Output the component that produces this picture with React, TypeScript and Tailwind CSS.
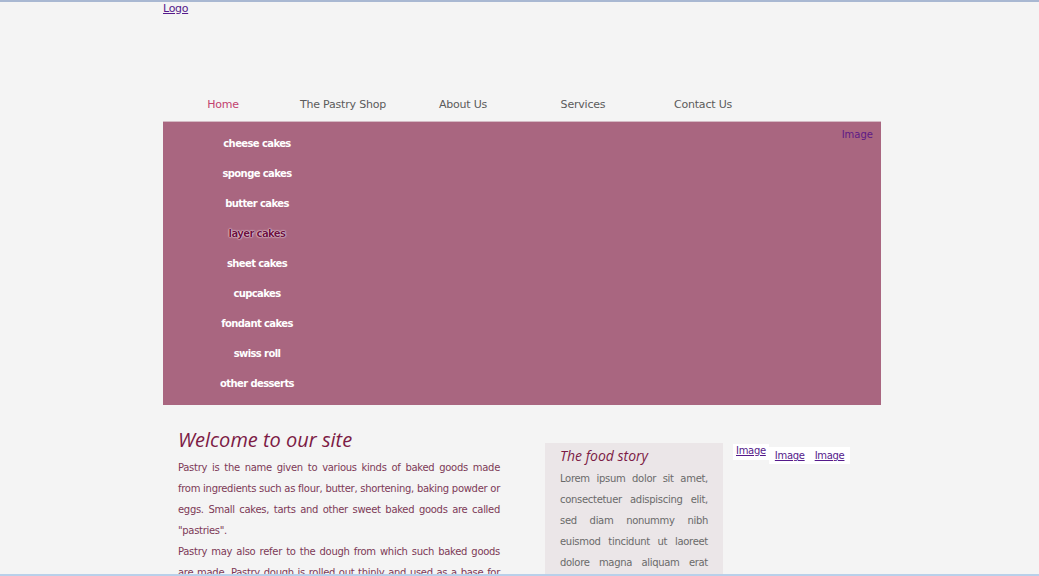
const cakes = [
  "cheese cakes",
  "sponge cakes",
  "butter cakes",
  "layer cakes",
  "sheet cakes",
  "cupcakes",
  "fondant cakes",
  "swiss roll",
  "other desserts",
];

const nav = ["Home", "The Pastry Shop", "About Us", "Services", "Contact Us"];

export default function App() {
  return (
    <div className="min-h-[576px] bg-[#f4f4f4] border-t-2 border-[#a9b8d2] font-['DejaVu_Sans',sans-serif]">
      <div className="ml-[163px] w-[718px]">
        {/* Header */}
        <div className="h-[119px] flex flex-col">
          <a href="#" className="text-[11px] leading-[14px] text-[#551a8b] underline self-start tracking-[-0.3px]">
            Logo
          </a>
          <div className="mt-auto mb-[4px] flex">
            {nav.map((n, i) => (
              <a
                key={n}
                href="#"
                className={`w-[120px] text-center text-[11px] leading-[24px] tracking-[-0.2px] ${i === 0 ? "text-[#c2416f]" : "text-[#5b5b5b]"}`}
              >
                {n}
              </a>
            ))}
          </div>
        </div>

        {/* Banner */}
        <div className="h-[284px] bg-[#a96680] border-t border-[#d4bac4] flex">
          <ul className="w-[188px] py-[6px]">
            {cakes.map((c) => (
              <li
                key={c}
                className={`h-[30px] flex items-center justify-center text-[10px] font-bold tracking-[-0.6px] ${
                  c === "layer cakes"
                    ? "text-[#6e1141] [text-shadow:0_0_2px_#fff,0_0_1px_#fff]"
                    : "text-white"
                }`}
              >
                {c}
              </li>
            ))}
          </ul>
          <div className="flex-1 flex justify-end pt-[6px] pr-[8px]">
            <span className="text-[10px] leading-[14px] text-[#5d1a86]">Image</span>
          </div>
        </div>

        {/* Content */}
        <div className="flex">
          <div className="w-[337px] pl-[15px] pt-[22px]">
            <h1 className="font-['Open_Sans',sans-serif] italic text-[20px] leading-[26px] text-[#7c1b45]">
              Welcome to our site
            </h1>
            <p className="mt-[4px] text-[10px] leading-[21px] text-[#7d3a57] text-justify tracking-[-0.3px]">
              Pastry is the name given to various kinds of baked goods made from ingredients such as
              flour, butter, shortening, baking powder or eggs. Small cakes, tarts and other sweet
              baked goods are called "pastries".
            </p>
            <p className="text-[10px] leading-[21px] text-[#7d3a57] text-justify tracking-[-0.3px]">
              Pastry may also refer to the dough from which such baked goods are made. Pastry dough
              is rolled out thinly and used as a base for baked products.
            </p>
          </div>
          <div className="ml-[45px] mt-[38px] w-[178px] bg-[#ebe6e8] px-[15px] pt-[3px] pb-[10px]">
            <h2 className="font-['Open_Sans',sans-serif] italic text-[14px] leading-[20px] text-[#7c1b45]">
              The food story
            </h2>
            <p className="mt-[2px] text-[10px] leading-[21px] text-[#6a6a6a] text-justify tracking-[-0.3px]">
              Lorem ipsum dolor sit amet, consectetuer adispiscing elit, sed diam nonummy nibh
              euismod tincidunt ut laoreet dolore magna aliquam erat volutpat.
            </p>
          </div>
          <div className="ml-[10px] mt-[39px] flex items-start text-[10px] leading-[14px] tracking-[-0.3px]">
            <div className="bg-white px-[3px] h-[16px] flex items-start">
              <a href="#" className="text-[#551a8b] underline">
                Image
              </a>
            </div>
            <div className="bg-white mt-[3px] h-[17px] px-[6px] flex gap-[10px] items-end pb-[1px]">
              <a href="#" className="text-[#551a8b] underline">
                Image
              </a>
              <a href="#" className="text-[#551a8b] underline">
                Image
              </a>
            </div>
          </div>
        </div>
      </div>
      <div className="fixed bottom-0 left-0 right-0 h-[2px] bg-[#b8d0ea]" />
    </div>
  );
}
